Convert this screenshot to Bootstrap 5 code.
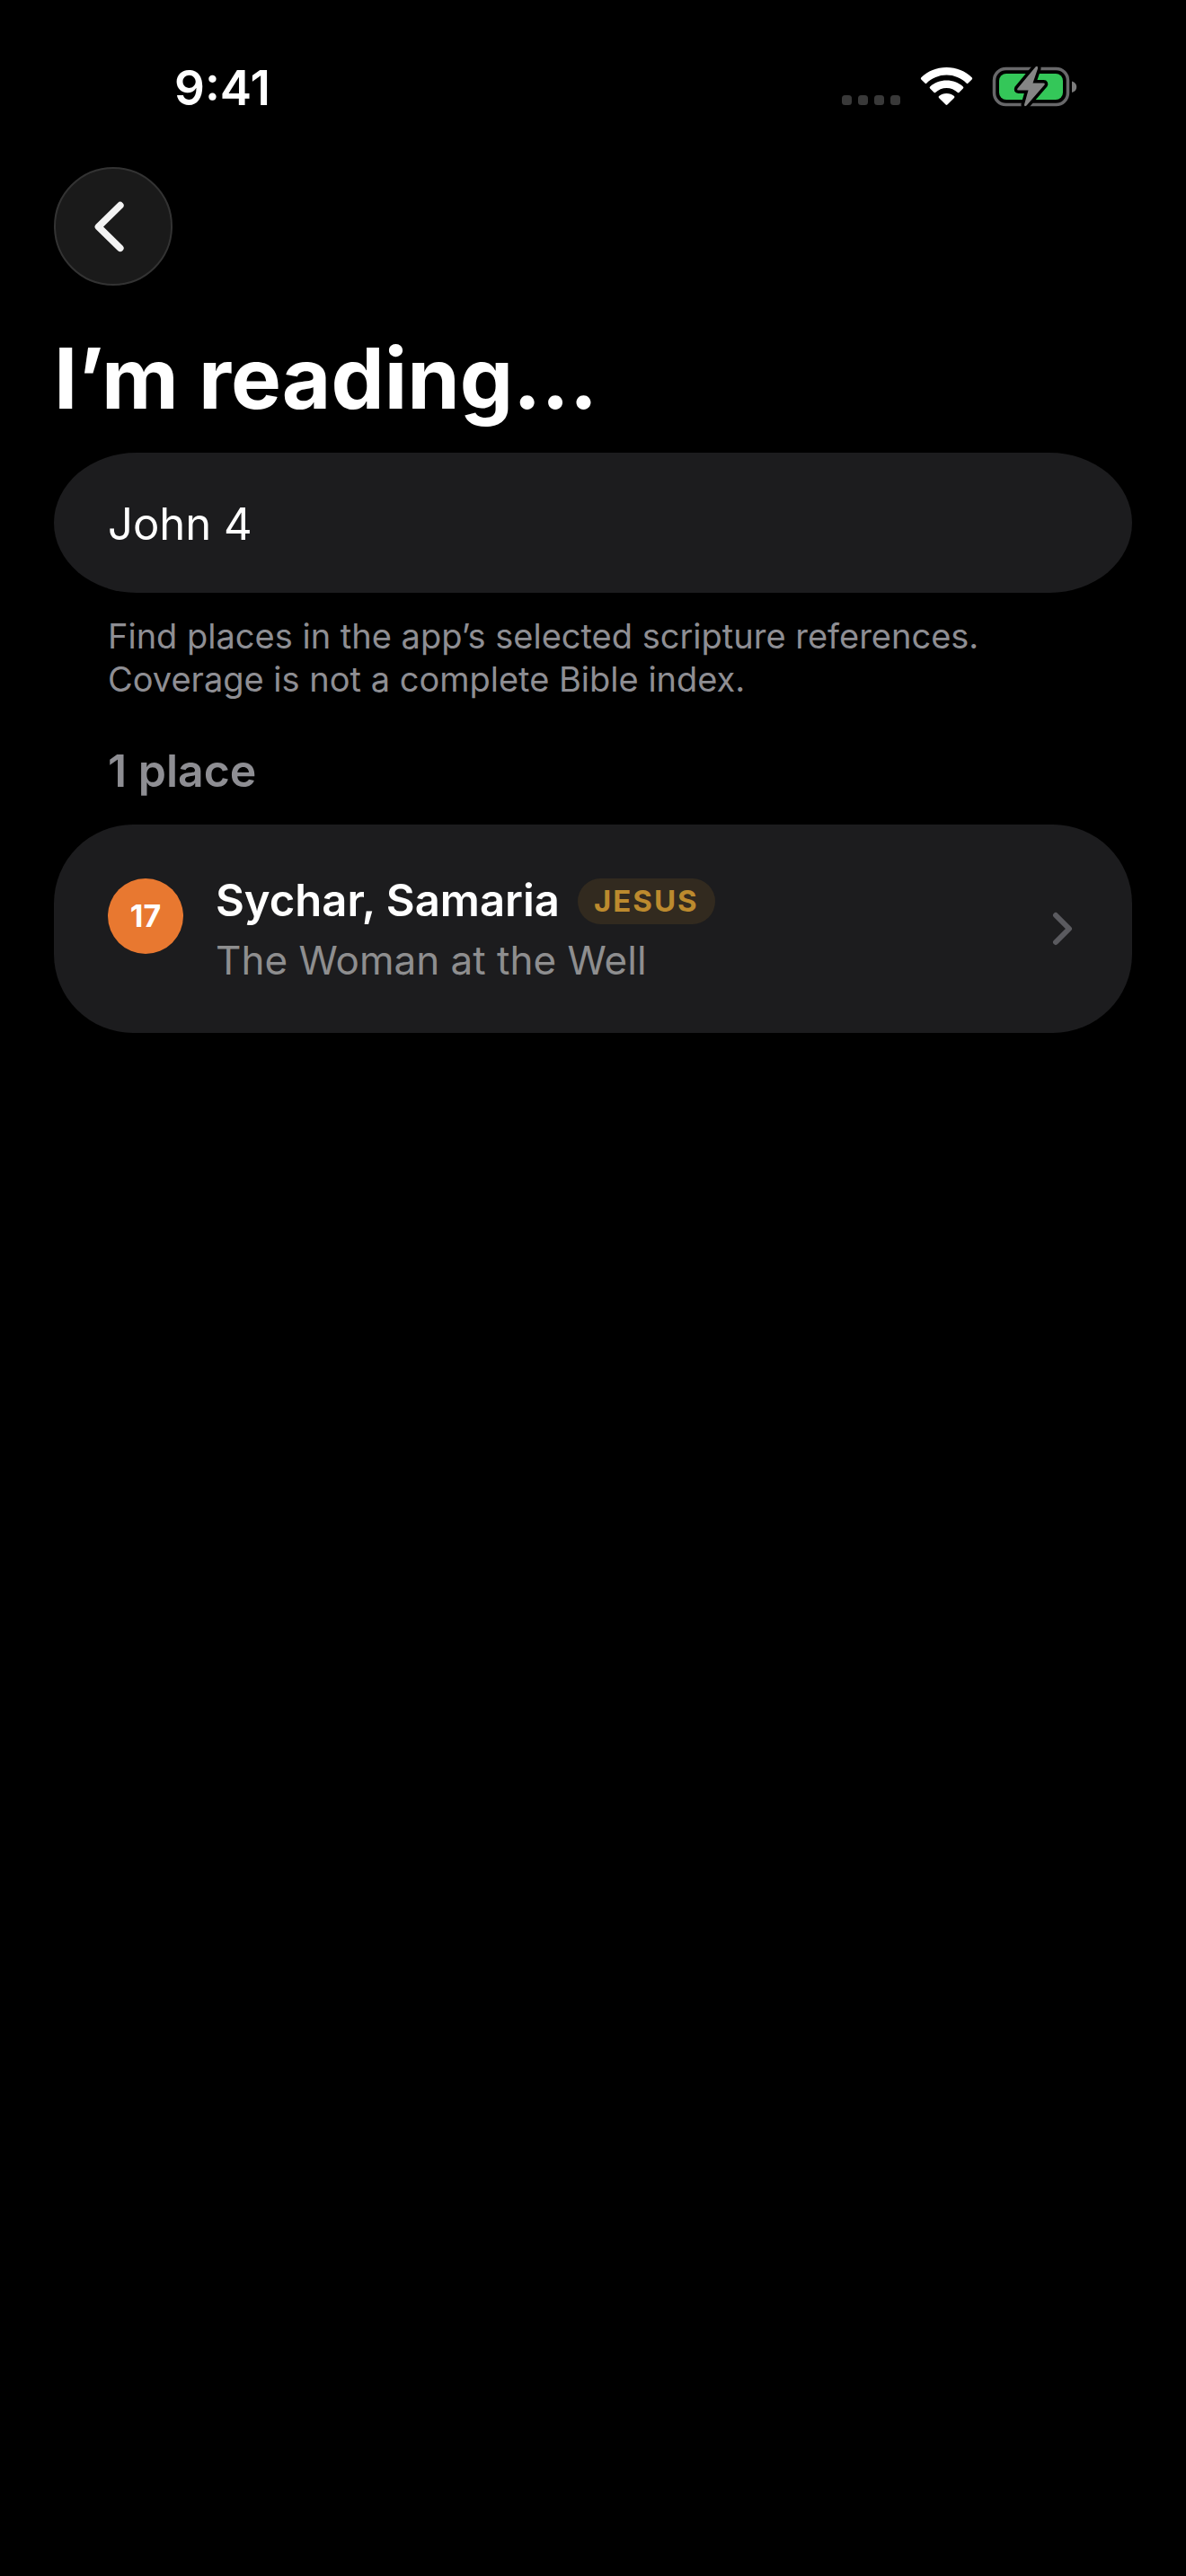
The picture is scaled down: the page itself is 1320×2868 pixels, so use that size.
<!DOCTYPE html>
<html lang="en" data-bs-theme="dark">
<head>
<meta charset="utf-8">
<meta name="viewport" content="width=device-width, initial-scale=1">
<title>I’m reading…</title>
<link href="https://cdn.jsdelivr.net/npm/bootstrap@5.3.0/dist/css/bootstrap.min.css" rel="stylesheet">
<style>
  body { background: #000; color: #fff; font-family: Inter, "Liberation Sans", sans-serif; font-size: 50px; line-height: 60px; }
  .status-bar { height: 186px; padding: 66px 120px 0 194px; }
  .clock { font-size: 53px; line-height: 64px; font-weight: 600; }
  .screen { padding: 0 60px; }
  .back-btn { width: 132px; height: 132px; background: #1a1a1a; border: 2px solid #333; }
  .page-title { font-size: 94px; line-height: 120px; font-weight: 700; margin: 43px 0 23px; }
  .search-box, .search-box:focus { height: 156px; padding: 2px 60px 0; background: #1c1c1e; color: #fff; border: 0; border-radius: 92px / 78px; font-size: 49px; box-shadow: none; }
  .hint { font-size: 38px; line-height: 48px; color: #8e8e93; padding: 0 60px; margin: 24px 0 0; }
  .section-title { font-size: 50px; line-height: 60px; font-weight: 600; color: #8e8e93; padding: 0 60px; margin: 48px 0 30px; }
  .place { height: 232px; padding: 0 60px; background: #1c1c1e; border-radius: 88px; }
  .place-number { width: 84px; height: 84px; background: #e87830; font-size: 34px; font-weight: 700; margin: 60px 36px 0 0; }
  .place-text { padding-top: 53px; }
  .place-name { font-size: 49px; line-height: 64px; font-weight: 600; margin-right: 20px; }
  .place-tag { height: 51px; padding: 0 18px; background: #322a1f; color: #bc8a2e; font-size: 33px; line-height: 51px; font-weight: 700; letter-spacing: 2px; border-radius: 26px; }
  .place-event { font-size: 44px; line-height: 68px; color: #8e8e8f; }
</style>
</head>
<body>
<header class="status-bar d-flex justify-content-between align-items-start">
  <span class="clock">9:41</span>
  <svg width="264" height="60" viewBox="0 0 264 60" role="img" aria-label="Wi-Fi connected, battery charging">
    <g fill="#393939"><rect x="1" y="40" width="11" height="11" rx="3.5"/><rect x="19" y="40" width="11" height="11" rx="3.5"/><rect x="37" y="40" width="11" height="11" rx="3.5"/><rect x="55" y="40" width="11" height="11" rx="3.5"/></g>
    <g fill="#fff" transform="translate(89 9)">
      <path d="M28.500 0C39.500 0 49.500 4 56.700 11.200Q57.800 12.300 56.700 13.400L52.300 17.800Q51.600 18.500 50.800 17.700C44.800 12 37 8.600 28.500 8.600S12.200 12 6.200 17.700Q5.400 18.500 4.700 17.800L.3 13.400Q-.8 12.300 .3 11.200C7.500 4 17.500 0 28.500 0Z"/>
      <path d="M28.500 14.600C35.500 14.600 41.900 17.100 46.900 21.500Q47.900 22.500 46.900 23.500L42.400 28Q41.700 28.600 40.900 28C37.500 24.900 33.200 23 28.500 23S19.500 24.900 16.100 28Q15.300 28.600 14.600 28L10.100 23.500Q9.100 22.500 10.100 21.500C15.100 17.100 21.500 14.600 28.500 14.600Z"/>
      <path d="M28.500 29C31.700 29 34.700 30.100 37 32Q37.900 33 37 34L29.400 41.600Q28.500 42.400 27.600 41.600L20 34Q19.100 33 20 32C22.300 30.100 25.300 29 28.500 29Z"/>
    </g>
    <rect x="170.500" y="10.500" width="82" height="40" rx="13" fill="none" stroke="#68686a" stroke-width="3.500"/>
    <path d="M257 24.500C264 26 264 35.500 257 37Z" fill="#7c7c7c"/>
    <rect x="176" y="16" width="71" height="29" rx="8" fill="#34c759"/>
    <path d="M216.500 8.500L196.500 32.500Q195.500 34.500 197.500 34.500H208.500L204 50.500Q204 53.500 206.500 51.500L226.500 28.500Q227.500 26.500 225.500 26.500H213.500L219 10.500Q219.500 6.500 216.500 8.500Z" fill="#858585" stroke="#000" stroke-width="7" stroke-linejoin="round" paint-order="stroke"/>
  </svg>
</header>

<main class="screen">
  <button type="button" class="back-btn btn rounded-circle p-0 d-flex align-items-center justify-content-center" aria-label="Back">
    <svg width="132" height="132" viewBox="0 0 132 132" fill="none" stroke="#f3f3f3" stroke-width="8" stroke-linecap="round" stroke-linejoin="round"><path d="M74 42L49 66.500L74 91"/></svg>
  </button>

  <h1 class="page-title"><label for="passage">I’m reading…</label></h1>
  <input id="passage" type="text" class="search-box form-control" value="John 4">
  <p class="hint">Find places in the app’s selected scripture references.<br>Coverage is not a complete Bible index.</p>

  <h2 class="section-title">1 place</h2>
  <a href="#sychar" class="place d-flex align-items-start text-decoration-none text-white">
    <span class="place-number rounded-circle d-flex align-items-center justify-content-center flex-shrink-0">17</span>
    <span class="place-text flex-grow-1">
      <span class="d-flex align-items-center">
        <span class="place-name">Sychar, Samaria</span>
        <span class="place-tag">JESUS</span>
      </span>
      <span class="place-event d-block">The Woman at the Well</span>
    </span>
    <svg class="align-self-center flex-shrink-0" width="30" height="44" viewBox="0 0 30 44" fill="none" stroke="#5a5a5f" stroke-width="6" stroke-linecap="round" stroke-linejoin="round" aria-hidden="true"><path d="M5 7L20 22L5 37"/></svg>
  </a>
</main>
<script src="https://cdn.jsdelivr.net/npm/bootstrap@5.3.0/dist/js/bootstrap.bundle.min.js"></script>
</body>
</html>
